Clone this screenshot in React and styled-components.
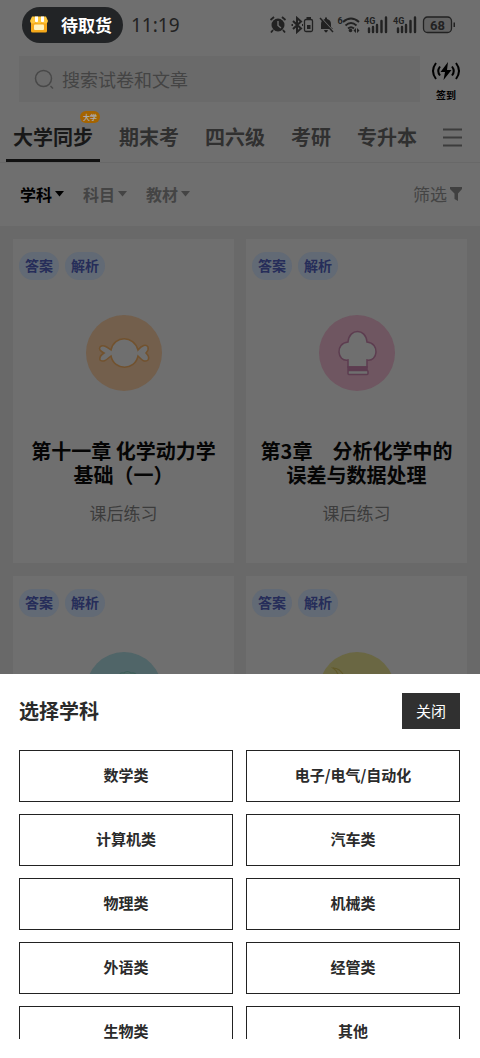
import React from "react";
import styled, { createGlobalStyle } from "styled-components";

const GlobalStyle = createGlobalStyle`
    *{
        box-sizing:border-box;
    }
    body{
        margin:0;
        background:#696969;
        font-family:"Noto Sans CJK SC", "Noto Sans", sans-serif;
    }
    button, input{
        font-family:inherit;
    }
`;

const Page = styled.div`
    height:100vh;
    overflow:hidden;
    background:#696969;
`;

const Top = styled.div`
    background:#6f6f6f;
`;

const StatusBar = styled.div`
    display:flex;
    align-items:center;
    height:50px;
    padding:0 24px 0 22px;
    color:#222;
`;

const Pickup = styled.div`
    display:flex;
    align-items:center;
    gap:13px;
    height:36px;
    padding:0 11px 2px 8px;
    border-radius:18px;
    background:#222426;
    color:#fff;
    font-size:17px;
    font-weight:700;
`;

const Clock = styled.span`
    margin-left:8px;
    flex:1;
    font-family:"Noto Sans", sans-serif;
    font-size:19px;
`;

const StatusIcons = styled.svg`
    display:block;
    font-family:Roboto, sans-serif;
    font-weight:700;
`;

const SearchRow = styled.div`
    display:flex;
    align-items:center;
    gap:8px;
    height:58px;
    padding:0 16px 0 19px;
`;

const SearchBox = styled.label`
    display:flex;
    flex:1;
    align-items:center;
    gap:7px;
    height:46px;
    padding:0 15px;
    background:#6a6a6a;
`;

const SearchInput = styled.input`
    flex:1;
    min-width:0;
    padding:0;
    border:0;
    outline:0;
    background:transparent;
    font-size:18px;
    color:#444;
    &::placeholder{
        color:#444;
        opacity:1;
    }
`;

const SignIn = styled.button`
    display:flex;
    flex-direction:column;
    align-items:center;
    gap:8px;
    width:36px;
    padding:6px 0 0;
    border:0;
    background:transparent;
    color:#000;
    font-size:10px;
    line-height:14px;
    font-weight:700;
`;

const Tabs = styled.nav`
    display:flex;
    gap:12px;
    height:55px;
    padding:0 18px 0 6px;
    border-bottom:1px solid #686868;
`;

const Tab = styled.a`
    position:relative;
    padding:14px 7px 0;
    border-bottom:3px solid ${props => props.$active ? "#111" : "transparent"};
    color:${props => props.$active ? "#181818" : "#303030"};
    font-size:20px;
    line-height:30px;
    font-weight:700;
    text-decoration:none;
    white-space:nowrap;
`;

const Badge = styled.span`
    position:absolute;
    top:3px;
    right:0;
    padding:0 3px;
    border-radius:6px;
    background:#a56400;
    color:#aaa;
    font-size:7px;
    line-height:12px;
`;

const MenuButton = styled.button`
    margin-left:auto;
    padding:8px 0 0;
    border:0;
    background:transparent;
`;

const Filters = styled.div`
    display:flex;
    align-items:center;
    gap:19px;
    height:63px;
    padding:0 18px 2px 20px;
`;

const Filter = styled.button`
    display:flex;
    align-items:center;
    gap:3px;
    padding:0;
    border:0;
    background:transparent;
    color:${props => props.$active ? "#000" : "#444"};
    font-size:16px;
    font-weight:700;
    &:last-child{
        margin-left:auto;
        font-size:17px;
        font-weight:400;
    }
`;

const Cards = styled.div`
    display:grid;
    grid-template-columns:1fr 1fr;
    gap:13px 12px;
    padding:13px;
`;

const Card = styled.article`
    display:flex;
    flex-direction:column;
    align-items:center;
    height:324px;
    padding:13px 6px;
    background:#6f6f6f;
`;

const Tags = styled.div`
    display:flex;
    align-self:stretch;
    gap:6px;
`;

const Tag = styled.span`
    height:28px;
    padding:0 6px;
    border-radius:14px;
    background:#626a75;
    color:#262d59;
    font-size:14px;
    line-height:26px;
    font-weight:700;
`;

const Picture = styled.svg`
    display:block;
    margin-top:35px;
`;

const CardTitle = styled.h2`
    margin:48px 0 0;
    color:#050505;
    font-size:20px;
    line-height:24px;
    font-weight:700;
    text-align:center;
    white-space:pre-line;
`;

const CardText = styled.p`
    margin:14px 0 0;
    color:#3c3c3c;
    font-size:17px;
    line-height:24px;
`;

const Sheet = styled.section`
    position:fixed;
    left:0;
    right:0;
    bottom:0;
    padding:19px 20px 19px 19px;
    background:#fff;
    color:#2b2b2b;
`;

const SheetHead = styled.div`
    display:flex;
    align-items:center;
    justify-content:space-between;
    margin-bottom:21px;
`;

const SheetTitle = styled.h1`
    margin:0;
    font-size:20px;
    line-height:30px;
    font-weight:700;
`;

const Close = styled.button`
    height:36px;
    padding:0 14px 2px;
    border:0;
    background:#303030;
    color:#fff;
    font-size:15px;
`;

const Subjects = styled.div`
    display:grid;
    grid-template-columns:1fr 1fr;
    gap:12px 13px;
    max-height:289px;
    overflow:hidden;
`;

const Subject = styled.button`
    height:52px;
    padding:0 0 2px;
    border:1px solid #222;
    background:#fff;
    color:#2b2b2b;
    font-size:15px;
    line-height:16px;
    font-weight:700;
`;

const tabs = ["大学同步", "期末考", "四六级", "考研", "专升本"];

const subjects = ["数学类", "电子/电气/自动化", "计算机类", "汽车类", "物理类", "机械类", "外语类", "经管类", "生物类", "其他"];

const cards = [
    { id: 1, title: "第十一章 化学动力学\n基础（一）", color: "#735f4c", icon: "candy" },
    { id: 2, title: "第3章　分析化学中的\n误差与数据处理", color: "#6f5661", icon: "hat" },
    { id: 3, title: "", color: "#506568", icon: "tree" },
    { id: 4, title: "", color: "#6a6743", icon: "banana" },
];

const drawings = {
    candy: (
        <path d="M25 35C28 20 48 20 52 35C56 30 60 29 62 32Q63 35 60 38Q64 42 62 45C58 48 55 44 52 41C49 56 28 56 25 41C21 44 18 48 14 45Q13 41 18 38Q12 35 14 32C17 29 21 32 25 35Z" fill="#6f6f6f" stroke="#72522e" strokeWidth="1.5" />
    ),
    hat: (
        <g fill="#6f6f6f" stroke="#5d3d50" strokeWidth="1.5">
            <path d="M29 52V45C18 47 16 28 29 27C30 13 47 13 48 27C61 28 59 47 48 45V52Z" />
            <path d="M29 52H48V55H29Z" fill="#5d3d50" />
            <rect x="29" y="55.500" width="20" height="4" rx="1" />
        </g>
    ),
    tree: (
        <path d="M34 23Q34 20 38 21Q41 18 45 21Q50 20 51 25V48H34Z" fill="#4e6764" stroke="#3f5f5a" strokeWidth="1.2" />
    ),
    banana: (
        <path d="M14 16Q21 16 25 24Q31 42 52 47Q29 53 21 35Q21 20 14 16Z" fill="#6a6743" stroke="#625a2a" strokeWidth="1.2" />
    ),
};

const Caret = () => (
    <svg width="9" height="6" viewBox="0 0 9 6"><path d="M0 0H9L4.500 5.500Z" fill="currentColor" /></svg>
);

const Signal = ({ x }) => (
    <g transform={`translate(${x} 0)`}>
        <text x="-4" y="8" fontSize="9">4G</text>
        <path d="M1 12.500V16M5 11V16M9 9V16M13.500 5V16M18 1.500V16" stroke="currentColor" strokeWidth="2.400" strokeLinecap="round" />
    </g>
);

const Status = () => (
    <StatusIcons width="187" height="18" viewBox="0 0 187 18" fill="currentColor" aria-hidden="true">
        {/* alarm */}
        <circle cx="9" cy="9" r="6.500" />
        <path d="M1.500 4L5 1M16.500 4L13 1M4 14L2 16.500M14 14L16 16.500" stroke="currentColor" strokeWidth="1.800" />
        <path d="M9 5V9.500L12 12" fill="none" stroke="#6f6f6f" strokeWidth="1.400" />
        {/* bluetooth with its battery */}
        <path d="M24 5L32 12.500L28 16V2L32 5.500L24 13" fill="none" stroke="currentColor" strokeWidth="2" />
        <path d="M22.500 9H24M33 9H34" stroke="currentColor" strokeWidth="2" />
        <rect x="35.500" y="3.500" width="8" height="12" rx="1.500" fill="none" stroke="currentColor" strokeWidth="1.300" />
        <path d="M37.500 1H42V3H37.500ZM38 9H41.500V13H38Z" />
        {/* muted bell */}
        <path d="M52 13V8Q52 4 56 3V1.500H58V3Q62 4 62 8V11L64 13ZM55 14H59Q58 16.500 57 16.500T55 14Z" />
        <path d="M52 2L65 16" stroke="#6f6f6f" strokeWidth="1.500" />
        <path d="M51 2L64 16" stroke="currentColor" strokeWidth="1.500" />
        {/* wifi */}
        <text x="68.500" y="8" fontSize="9">6</text>
        <path d="M74 6Q82 -1 90 6M76.500 9.500Q82 4.500 87.500 9.500M79 12.500Q82 10 85 12.500" fill="none" stroke="currentColor" strokeWidth="1.900" />
        <circle cx="81.500" cy="14.500" r="1.800" />
        <path d="M87 12L84.500 14.500L87 17ZM88 12L90.500 14.500L88 17Z" />
        <Signal x={99} />
        <Signal x={128} />
        {/* battery */}
        <rect x="154.500" y="1" width="28" height="15.500" rx="4" fill="#626262" stroke="currentColor" strokeWidth="1.300" />
        <path d="M184.500 6.500H186V11H184.500Z" />
        <text x="168.500" y="13.500" fontSize="13" textAnchor="middle">68</text>
    </StatusIcons>
);

const App = () => (
    <>
        <GlobalStyle />
        <Page>
            <Top>
                <StatusBar>
                    <Pickup>
                        <svg width="18" height="17" viewBox="0 0 18 17">
                            <path d="M1 5H17V15Q17 16.500 15.500 16.500H2.500Q1 16.500 1 15Z" fill="#f5a91b" />
                            <path d="M2 0.500H16L18 5Q17.500 7.500 15.500 7.500T12 6Q11 7.500 9 7.500T6 6Q4.500 7.500 2.500 7.500T0 5Z" fill="#ffc83c" />
                            <path d="M5 0.500H8V5.500Q6.500 7 5 5.500ZM11 0.500H14V5.500Q12.500 7 11 5.500Z" fill="#fff" />
                            <rect x="4" y="8.500" width="10" height="5.500" rx="1" fill="#fff3c0" />
                        </svg>
                        待取货
                    </Pickup>
                    <Clock>11:19</Clock>
                    <Status />
                </StatusBar>
                <SearchRow>
                    <SearchBox>
                        <svg width="21" height="21" viewBox="0 0 21 21" fill="none" stroke="#484848" strokeWidth="1.500" aria-hidden="true">
                            <circle cx="9.500" cy="9.500" r="8" />
                            <path d="M16.500 17L19 19.500" />
                        </svg>
                        <SearchInput type="search" aria-label="搜索试卷和文章" placeholder="搜索试卷和文章" />
                    </SearchBox>
                    <SignIn>
                        <svg width="30" height="18" viewBox="0 0 30 18" fill="none" stroke="currentColor" strokeWidth="2">
                            <path d="M5 1Q-1 9 5 17M9 4.500Q5.500 9 9 13.500M25 1Q31 9 25 17M21 4.500Q24.500 9 21 13.500" />
                            <path d="M17 0L9.500 10H14L12.500 18L20.500 8H16Z" fill="currentColor" stroke="none" />
                        </svg>
                        签到
                    </SignIn>
                </SearchRow>
                <Tabs>
                    {tabs.map((x, index) => (
                        <Tab key={x} href="#" $active={index === 0}>
                            {x}
                            {index === 0 && <Badge>大学</Badge>}
                        </Tab>
                    ))}
                    <MenuButton aria-label="菜单">
                        <svg width="19" height="19" viewBox="0 0 19 19"><path d="M0 1.500H19M0 9.500H19M0 17.500H19" stroke="#3c3c3c" strokeWidth="2" /></svg>
                    </MenuButton>
                </Tabs>
                <Filters>
                    <Filter $active>学科<Caret /></Filter>
                    <Filter>科目<Caret /></Filter>
                    <Filter>教材<Caret /></Filter>
                    <Filter>
                        筛选
                        <svg width="12" height="14" viewBox="0 0 12 14"><path d="M0 0H12V2L8 6.500V14L4.500 12V6.500L0 2Z" fill="#404040" /></svg>
                    </Filter>
                </Filters>
            </Top>
            <Cards>
                {cards.map(x => (
                    <Card key={x.id}>
                        <Tags>
                            <Tag>答案</Tag>
                            <Tag>解析</Tag>
                        </Tags>
                        <Picture width="76" height="76" viewBox="0 0 76 76">
                            <circle cx="38" cy="38" r="38" fill={x.color} />
                            {drawings[x.icon]}
                        </Picture>
                        {x.title && <CardTitle>{x.title}</CardTitle>}
                        {x.title && <CardText>课后练习</CardText>}
                    </Card>
                ))}
            </Cards>
            <Sheet>
                <SheetHead>
                    <SheetTitle>选择学科</SheetTitle>
                    <Close>关闭</Close>
                </SheetHead>
                <Subjects>
                    {subjects.map(x => <Subject key={x}>{x}</Subject>)}
                </Subjects>
            </Sheet>
        </Page>
    </>
);

export default App;
